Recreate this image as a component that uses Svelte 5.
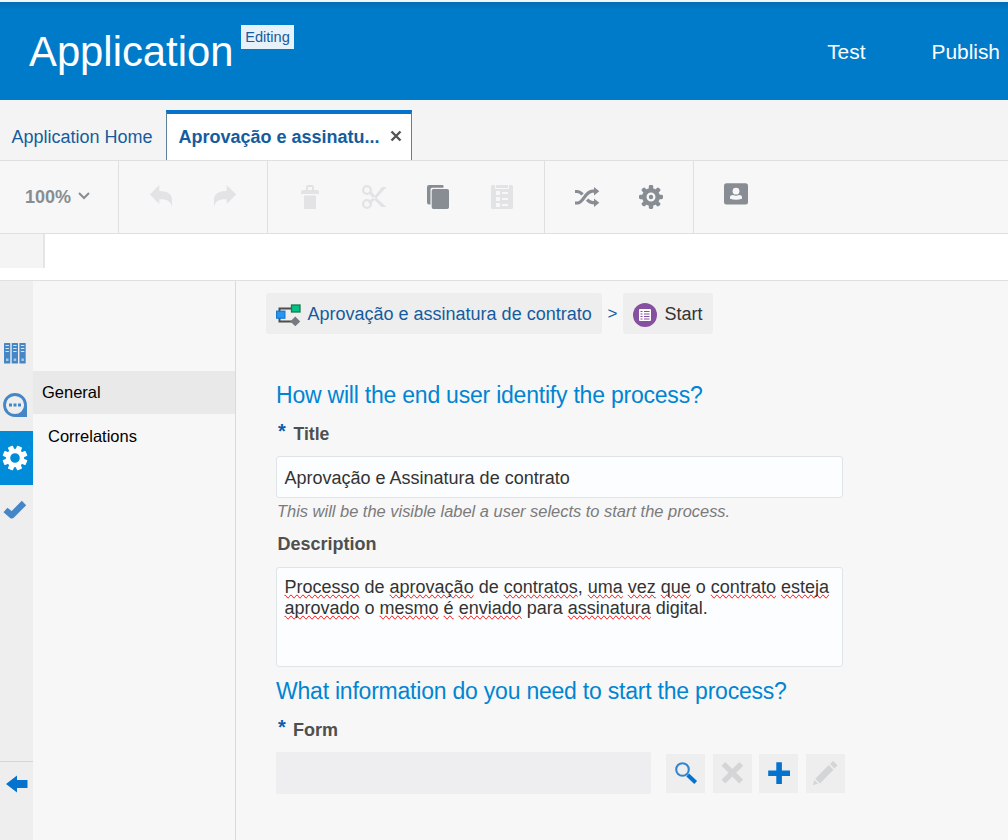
<script>
  const lines = [
    [['Processo', 1], [' de ', 0], ['aprovação', 1], [' de ', 0], ['contratos', 1], [', ', 0], ['uma', 1], [' ', 0], ['vez', 1], [' ', 0], ['que', 1], [' o ', 0], ['contrato', 1], [' ', 0], ['esteja', 1]],
    [['aprovado', 1], [' o ', 0], ['mesmo', 1], [' ', 0], ['é', 1], [' ', 0], ['enviado', 1], [' para ', 0], ['assinatura', 1], [' digital.', 0]]
  ];
  const teeth = [0, 45, 90, 135, 180, 225, 270, 315];
</script>

<div class="app">
  <header>
    <h1>Application</h1>
    <span class="badge">Editing</span>
    <nav><a href="#test">Test</a><a href="#publish">Publish</a></nav>
  </header>

  <div class="tabs">
    <div class="tab home">Application Home</div>
    <div class="tab active">
      <span>Aprovação e assinatu...</span>
      <svg width="12" height="12" viewBox="0 0 12 12"><path d="M1.500 1.500l9 9M10.500 1.500l-9 9" stroke="#555" stroke-width="2.400" /></svg>
    </div>
  </div>

  <div class="toolbar">
    <div class="group zoom">
      <span>100%</span>
      <svg width="12" height="8" viewBox="0 0 12 8"><path d="M1 1l5 5 5-5" fill="none" stroke="#878d92" stroke-width="2" /></svg>
    </div>
    <div class="group">
      <svg class="off" viewBox="0 0 24 24"><path d="M.8 9.500L10.300 0v6C18.500 6 23 9 23 14.500V22.500c-1-6-4.500-8.500-12.700-8.200V19z" /></svg>
      <svg class="off" viewBox="0 0 24 24"><path d="M23.200 9.500L13.700 0v6C5.500 6 1 9 1 14.500V22.500c1-6 4.500-8.500 12.700-8.200V19z" /></svg>
    </div>
    <div class="group">
      <svg class="off" viewBox="0 0 24 24"><path d="M3 9V7q0-2 2-2h3V2q0-2 2-2h4q2 0 2 2v3h3q2 0 2 2v2zM10 5h4V2h-4zM6 10.500h12V24H6z" fill-rule="evenodd" /></svg>
      <svg class="off" viewBox="0 0 24 24"><g fill="none" stroke="#e1e3e5"><circle cx="5" cy="5" r="3.900" stroke-width="2.300" /><circle cx="5" cy="19" r="3.900" stroke-width="2.300" /></g><path d="M7 9l2.500-2.500 3.500 4.300L20 2h4.500L14.500 13l10 9h-5l-7-7-4.500 4.500-2-2.700 5-4z" /><circle cx="12.500" cy="13" r="1" fill="#f7f7f7" /></svg>
      <svg class="on" viewBox="0 0 24 24"><path d="M3 0h13.500q1 0 1 1v1.800H6Q4.500 2.800 4.500 4.500v15H3q-2 0-2-2V2q0-2 2-2zM7.500 4h13.700q1.800 0 1.800 1.800v16.400q0 1.800-1.800 1.800H7.500q-1.800 0-1.800-1.800V5.800Q5.700 4 7.500 4z" /></svg>
      <svg class="off" viewBox="0 0 24 24"><path d="M1 1.500Q1 0 2.500 0H5v4h14V0h2.500Q23 0 23 1.500V22.500Q23 24 21.500 24h-19Q1 24 1 22.500zM6 0h12v3H6zM6 6h4v4H6zM12 7h6v2h-6zM6 12h4v4H6zM12 13h6v2h-6zM6 18h4v4H6zM12 19h6v2h-6z" fill-rule="evenodd" /></svg>
    </div>
    <div class="group">
      <svg class="on" viewBox="0 0 24 24"><g fill="none" stroke="#878d92" stroke-width="3.200"><path d="M0 18h2.500c6 0 7.500-11.500 15-11.800h2.500" /><path d="M0 6.500h2c2.500 0 4 1.200 5.500 3M12.200 14.500c1.800 2.500 3.200 3.300 7.800 3.300" /></g><path d="M19 2l5.300 4.200-5.300 4.300zM19 13.500l5.300 4.200-5.300 4.300z" /></svg>
      <svg class="on" viewBox="0 0 24 24">
        {#each teeth as angle}<rect x="9.800" y="0" width="4.400" height="7" rx="1.400" transform={`rotate(${angle} 12 12)`} />{/each}
        <circle cx="12" cy="12" r="6.700" fill="none" stroke="#878d92" stroke-width="4.400" /><circle cx="12" cy="12" r="2.200" />
      </svg>
    </div>
    <div class="group person">
      <svg class="on" viewBox="0 0 24 24"><rect x="0" y=".3" width="24" height="21.300" rx="2.500" /><circle cx="12" cy="8.200" r="3.400" fill="#f7f7f7" /><path d="M6 15.800V14.300q0-2.300 3-2.300 3 1.500 6 0 3 0 3 2.300v1.500q-6 2-12 0z" fill="#f7f7f7" /></svg>
    </div>
  </div>

  <div class="strip"><div class="stub"></div></div>

  <main>
    <aside class="rail">
      <div class="cell bars">
        <svg width="24" height="22" viewBox="0 0 24 22">
          {#each [1, 8.700, 16.400] as x}
            <rect x={x} y="1" width="6.300" height="20.500" rx=".6" fill="#4587c6" />
            <path d={`M${x + 1.500} 3.500h3.400M${x + 1.500} 6.500h3.400M${x + 1.500} 9.500h3.400`} stroke="#d8e5f1" stroke-width="1.200" />
            <rect x={x + 2} y="16.500" width="2.500" height="2.500" fill="#a9c8e4" />
          {/each}
        </svg>
      </div>
      <div class="cell chat">
        <svg width="24" height="24" viewBox="0 0 24 24"><path d="M24 12v12H12z" fill="#4587c6" /><circle cx="12" cy="12" r="10.500" fill="#eee" stroke="#4587c6" stroke-width="2.800" /><path d="M6 10.500h3v3H6zM10.500 10.500h3v3h-3zM15 10.500h3v3h-3z" fill="#4587c6" /></svg>
      </div>
      <div class="cell selected">
        <svg width="24" height="24" viewBox="0 0 24 24">
          {#each teeth as angle}<rect x="9.300" y="-.4" width="5.400" height="6" rx=".8" fill="#fff" transform={`rotate(${angle + 22.500} 12 12)`} />{/each}
          <circle cx="12" cy="12" r="7" fill="none" stroke="#fff" stroke-width="4.400" />
        </svg>
      </div>
      <div class="cell check">
        <svg width="24" height="20" viewBox="0 0 24 20"><path d="M2.500 10l6.300 5.300L21 3" fill="none" stroke="#4587c6" stroke-width="6.200" stroke-linejoin="round" /></svg>
      </div>
      <div class="cell back">
        <svg width="22" height="18" viewBox="0 0 22 18"><path d="M0 9L11 .5V5h10.500v8H11v4.500z" fill="#0572ce" /></svg>
      </div>
    </aside>

    <aside class="side">
      <div class="item current">General</div>
      <div class="item">Correlations</div>
    </aside>

    <section>
      <div class="crumbs">
        <div class="crumb process">
          <svg width="24" height="22" viewBox="0 0 24 22"><path d="M3.500 9V4.500H16M3.500 13v4.500H16" fill="none" stroke="#4d4d4d" stroke-width="2" /><rect x="15.500" y="1" width="8.500" height="7" fill="#04c18a" stroke="#167c49" stroke-width="1.300" /><rect x=".6" y="7.200" width="8.300" height="7" fill="#2896f0" stroke="#1478cc" stroke-width="1.200" /><path d="M19.300 12.500l4.900 5-4.900 4.700-5-4.700z" fill="#777b80" /></svg>
          <span>Aprovação e assinatura de contrato</span>
        </div>
        <span class="sep">&gt;</span>
        <div class="crumb start">
          <svg width="24" height="24" viewBox="0 0 24 24"><circle cx="12" cy="12" r="12" fill="#874f9f" /><rect x="6" y="6" width="12" height="12" rx="1" fill="#fff" /><path d="M7.500 8.500h2M7.500 11h2M7.500 13.500h2M7.500 16h2M11 8.500h5.500M11 11h5.500M11 13.500h5.500M11 16h5.500" stroke="#874f9f" stroke-width="1" /></svg>
          <span>Start</span>
        </div>
      </div>

      <h2>How will the end user identify the process?</h2>
      <div class="label title"><b class="star">*</b><span>Title</span></div>
      <div class="field">Aprovação e Assinatura de contrato</div>
      <p class="hint">This will be the visible label a user selects to start the process.</p>
      <div class="label desc">Description</div>
      <div class="area">
        {#each lines as line}
          <div class="line">{#each line as [text, wrong]}<span class:wrong>{text}</span>{/each}</div>
        {/each}
      </div>
      <h2 class="second">What information do you need to start the process?</h2>
      <div class="label form"><b class="star">*</b><span>Form</span></div>
      <div class="picker">
        <div class="value"></div>
        <div class="btn"><svg width="24" height="24" viewBox="0 0 24 24"><circle cx="8.500" cy="8.500" r="6.300" fill="none" stroke="#3385d0" stroke-width="2.100" /><path d="M13.700 14l8 7.500" stroke="#0572ce" stroke-width="4" /></svg></div>
        <div class="btn"><svg width="24" height="24" viewBox="0 0 24 24"><path d="M3.500 4l15.500 15.500M19 4L3.500 19.500" stroke="#d4d5d6" stroke-width="6" stroke-linecap="square" transform="translate(1.200 1.200) scale(.9)" /></svg></div>
        <div class="btn"><svg width="24" height="24" viewBox="0 0 24 24"><path d="M9.300 1.200h5.600v8.200H23V15h-8.100v8H9.300v-8H1.200V9.400h8.100z" fill="#0572ce" /></svg></div>
        <div class="btn"><svg width="24" height="24" viewBox="0 0 24 24"><path d="M-1 24l1.300-5 3.800 3.800zM1.200 17.800L14.700 4l4.800 4.800L6 22.500zM16 3L19 0 23.500 4.300l-3 3.300z" fill="#d4d5d6" /></svg></div>
      </div>
    </section>
  </main>
</div>

<style>
  :global(body) { margin: 0; overflow: hidden; }
  .app { width: 1008px; height: 840px; display: flex; flex-direction: column; overflow: hidden; background: #f7f7f7; font-family: "Liberation Sans", Arial, sans-serif; font-size: 18px; color: #333; box-sizing: border-box; }
  .app :global(*) { box-sizing: border-box; }
  svg { display: block; flex: none; overflow: visible; }
  h1, h2, p { margin: 0; font-weight: 400; white-space: nowrap; }

  header { height: 100px; flex: none; display: flex; align-items: flex-start; padding: 0 8px 0 29px; border-top: 2px solid #f0f4f7; background: linear-gradient(#006cb3, #007bc9 8px); color: #fff; }
  h1 { font-size: 41.800px; line-height: 48px; margin-top: 26px; width: 212px; }
  .badge { margin-top: 23px; height: 24px; width: 53px; line-height: 24px; background: #e6f1f9; color: #145c9e; font-size: 14.600px; text-align: center; }
  nav { margin-left: auto; display: flex; gap: 66px; margin-top: 38px; }
  nav a { color: #fff; text-decoration: none; font-size: 20.900px; line-height: 24px; }

  .tabs { height: 61px; flex: none; display: flex; align-items: flex-end; background: #f4f4f4; border-bottom: 1px solid #dfe0e1; color: #145c9e; }
  .tab { height: 50px; display: flex; align-items: center; white-space: nowrap; }
  .home { width: 166px; padding: 4px 0 0 11.500px; }
  .active { width: 246px; border: 1px solid #60819a; border-top: 4px solid #0572ce; border-bottom: 0; background: #fff; padding: 0 9px 0 11.500px; justify-content: space-between; font-weight: 700; }
  .active svg { margin-bottom: 2px; }
  .active span { padding-top: 1px; }

  .toolbar { height: 73px; flex: none; display: flex; border-bottom: 1px solid #dfe0e1; background: #f7f7f7; }
  .group { display: flex; gap: 40px; padding: 24px 30px; border-right: 1px solid #dfe0e1; }
  .group:last-child { border-right: 0; }
  .group svg { width: 24px; height: 24px; }
  .zoom { width: 119px; padding: 26px 0 0 25px; gap: 7px; color: #878d92; font-weight: 700; line-height: 20px; }
  .zoom span { width: 46px; }
  .zoom svg { width: 12px; height: 8px; margin-top: 5px; }
  .person { padding-top: 22px; }
  .off { fill: #e1e3e5; }
  .on { fill: #878d92; }

  .strip { height: 47px; flex: none; background: #fff; border-bottom: 1px solid #dfe0e1; }
  .stub { width: 45px; height: 34px; background: #f4f4f4; border-right: 2px solid #e4e5e5; }

  main { flex: 1; display: flex; min-height: 0; }
  .rail { width: 33px; background: #eee; display: flex; flex-direction: column; padding-top: 61px; }
  .cell { padding-left: 3px; flex: none; }
  .bars { height: 51px; }
  .chat { height: 38px; }
  .selected { height: 54px; background: #008cd9; padding-top: 15px; }
  .check { padding-top: 15px; }
  .back { margin-top: auto; height: 79px; border-top: 1px solid #d5d6d7; padding: 13px 0 0 6px; }

  .side { width: 203px; border-right: 1px solid #d9dadb; padding-top: 90px; color: #000; font-size: 16.500px; }
  .item { height: 44px; line-height: 44px; padding-left: 15px; }
  .current { height: 43px; line-height: 43px; padding-left: 9px; background: #e9e9e9; }

  section { flex: 1; padding: 12px 0 0 40px; }
  .crumbs { display: flex; height: 41px; margin-left: -10px; color: #145c9e; }
  .crumb { display: flex; background: #eee; border-radius: 3px; line-height: 42px; padding-left: 10px; white-space: nowrap; }
  .process { width: 336px; gap: 7.500px; }
  .process svg { margin-top: 11px; }
  .sep { width: 21px; text-align: center; line-height: 41px; font-size: 17px; }
  .start { width: 90px; gap: 7.500px; color: #333; }
  .start svg { margin-top: 10px; }

  h2 { margin-top: 46px; height: 30px; line-height: 30px; font-size: 23px; letter-spacing: -.220px; color: #0085d3; }
  .label { font-weight: 700; color: #4f4f4f; line-height: 20px; display: flex; padding-left: 2px; }
  .star { color: #0a5fae; width: 15.500px; font-size: 20px; line-height: 14px; }
  .title { margin-top: 14px; height: 32px; font-size: 17.600px; }
  .field { width: 567px; height: 42px; border: 1px solid #dfe4e7; border-radius: 3px; background: #fcfdfe; padding-left: 7.500px; line-height: 42px; }
  .hint { font-style: italic; font-size: 16.450px; line-height: 20px; color: #7b7b7b; margin: 3px 0 0 1px; }
  .desc { margin-top: 13px; height: 33px; padding-left: 1.500px; }
  .area { width: 567px; height: 100px; border: 1px solid #dfe4e7; border-radius: 3px; background: #fcfdfe; padding: 9px 0 0 7.500px; }
  .line { height: 21px; line-height: 21px; white-space: pre; }
  .wrong { text-decoration: spelling-error; }
  .second { margin-top: 9px; }
  .form { margin-top: 14px; height: 32px; }
  .form .star { width: 15px; }
  .picker { display: flex; align-items: flex-start; }
  .value { width: 375px; height: 42px; border-radius: 2px; background: #eeeef0; margin-right: 15px; }
  .btn { width: 39px; height: 39px; margin: 2px 7.700px 0 0; background: #eee; padding: 7px 0 0 8px; }
</style>
